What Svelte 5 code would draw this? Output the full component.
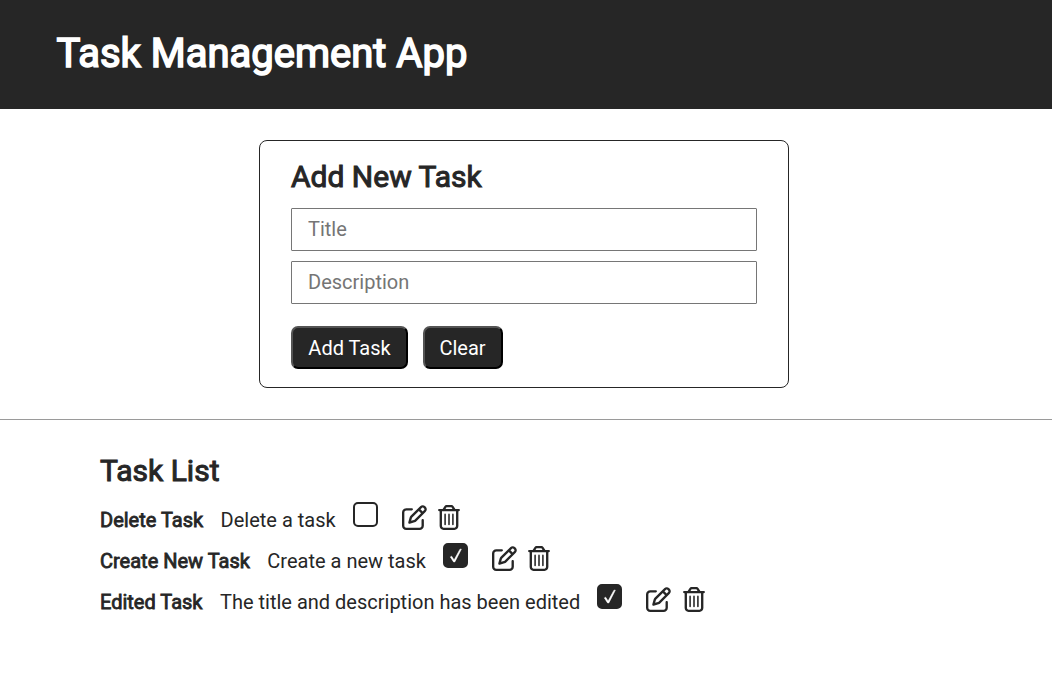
<script>
  let title = $state('');
  let description = $state('');
  let tasks = $state([
    { id: 1, title: 'Delete Task', description: 'Delete a task', done: false },
    { id: 2, title: 'Create New Task', description: 'Create a new task', done: true },
    { id: 3, title: 'Edited Task', description: 'The title and description has been edited', done: true }
  ]);

  function clear() {
    title = '';
    description = '';
  }

  function add() {
    if (!title) return;
    tasks.push({ id: Date.now(), title, description, done: false });
    clear();
  }

  function edit(task) {
    title = task.title;
    description = task.description;
    remove(task);
  }

  function remove(task) {
    tasks = tasks.filter((t) => t.id !== task.id);
  }
</script>

<header><h1>Task Management App</h1></header>

<section class="new-task">
  <h2>Add New Task</h2>
  <input type="text" placeholder="Title" bind:value={title} />
  <input type="text" placeholder="Description" bind:value={description} />
  <div class="buttons">
    <button class="btn" onclick={add}>Add Task</button>
    <button class="btn" onclick={clear}>Clear</button>
  </div>
</section>

<div class="divider"></div>

<section class="list">
  <h2>Task List</h2>
  <ul>
    {#each tasks as task (task.id)}
      <li>
        <span class="name">{task.title}</span>
        <span class="desc">{task.description}</span>
        <button class="box" class:done={task.done} aria-label="Done" onclick={() => (task.done = !task.done)}>
          {#if task.done}
            <svg viewBox="0 0 25 25" width="25" height="25"><path d="M7.4 13.9 L8.6 13.2 L11.1 17 L17 6.2 L18.3 6.2 L11.8 18.9 L10.6 18.9 Z" fill="#fff" stroke="#fff" stroke-width=".6" /></svg>
          {/if}
        </button>
        <button class="icon edit" aria-label="Edit" onclick={() => edit(task)}>
          <svg viewBox="0 0 512 512" width="25" height="25"><path fill="currentColor" d="M441 58.9L453.1 71c9.4 9.4 9.4 24.6 0 33.9L424 134.1 377.9 88 407 58.9c9.4-9.4 24.6-9.4 33.9 0zM209.8 256.2L344 121.9 390.1 168 255.8 302.2c-2.9 2.9-6.5 5-10.4 6.1l-58.5 16.7 16.7-58.5c1.1-3.9 3.2-7.5 6.1-10.4zM373.1 25L175.8 222.2c-8.7 8.7-15 19.4-18.3 31.1l-28.6 100c-2.4 8.4-.1 17.4 6.1 23.6s15.2 8.5 23.6 6.1l100-28.6c11.8-3.4 22.5-9.7 31.1-18.3L487 138.9c28.1-28.1 28.1-73.7 0-101.8L474.9 25C446.8-3.1 401.2-3.1 373.1 25zM88 64C39.4 64 0 103.4 0 152V424c0 48.6 39.4 88 88 88H360c48.6 0 88-39.4 88-88V312c0-13.3-10.7-24-24-24s-24 10.7-24 24V424c0 22.1-17.9 40-40 40H88c-22.1 0-40-17.9-40-40V152c0-22.1 17.9-40 40-40H200c13.3 0 24-10.7 24-24s-10.7-24-24-24H88z" /></svg>
        </button>
        <button class="icon trash" aria-label="Delete" onclick={() => remove(task)}>
          <svg viewBox="0 0 448 512" width="22" height="25"><path fill="currentColor" d="M170.5 51.6L151.5 80h145l-19-28.4c-1.5-2.2-4-3.6-6.7-3.6H177.1c-2.7 0-5.2 1.3-6.7 3.6zm147-26.6L354.2 80H368h48 8c13.3 0 24 10.7 24 24s-10.7 24-24 24h-8V432c0 44.2-35.8 80-80 80H112c-44.2 0-80-35.8-80-80V128H24c-13.3 0-24-10.7-24-24S10.7 80 24 80h8H80 93.8l36.7-55.1C140.9 9.4 158.4 0 177.1 0h93.7c18.7 0 36.2 9.4 46.6 24.9zM80 128V432c0 17.7 14.3 32 32 32H336c17.7 0 32-14.3 32-32V128H80zm80 64V400c0 8.8-7.2 16-16 16s-16-7.2-16-16V192c0-8.8 7.2-16 16-16s16 7.2 16 16zm80 0V400c0 8.8-7.2 16-16 16s-16-7.2-16-16V192c0-8.8 7.2-16 16-16s16 7.2 16 16zm80 0V400c0 8.8-7.2 16-16 16s-16-7.2-16-16V192c0-8.8 7.2-16 16-16s16 7.2 16 16z" /></svg>
        </button>
      </li>
    {/each}
  </ul>
</section>

<style>
  :global(body) {
    margin: 0;
    background: #fff;
    color: #262626;
    font-family: Roboto, sans-serif;
    font-size: 20px;
  }
  header {
    box-sizing: border-box;
    height: 109px;
    padding: 30px 56.5px;
    background: #262626;
    color: #fff;
  }
  h1, h2 {
    margin: 0;
    font-weight: 400;
  }
  h1 {
    font-size: 40px;
    line-height: 47px;
    -webkit-text-stroke: 1.6px currentColor;
  }
  h2 {
    font-size: 30px;
    line-height: 35px;
    -webkit-text-stroke: 1px currentColor;
  }
  .new-task {
    box-sizing: border-box;
    width: 530px;
    height: 248px;
    margin: 31px 0 0 259px;
    padding: 18px 31px 0;
    border: 1px solid #262626;
    border-radius: 8px;
  }
  input {
    display: block;
    box-sizing: border-box;
    width: 466px;
    height: 43px;
    margin: 0 0 10px;
    padding: 0 16px 2px;
    border: 1px solid #767676;
    border-radius: 1px;
    background: #fff;
    font: 20px Roboto, sans-serif;
  }
  h2 + input {
    margin-top: 14px;
  }
  input::placeholder {
    color: #757575;
  }
  .buttons {
    display: flex;
    gap: 15px;
    margin-top: 22px;
  }
  .btn {
    box-sizing: border-box;
    width: 117px;
    height: 43px;
    padding: 0;
    border: 2px outset #000;
    border-radius: 7px;
    background: #262626;
    color: #fff;
    font: 20px Roboto, sans-serif;
  }
  .btn + .btn {
    width: 80px;
    padding-right: 1px;
  }
  .divider {
    height: 1px;
    margin-top: 31px;
    background: #9a9a9a;
  }
  .list {
    padding: 33px 100px 0;
  }
  ul {
    margin: 13px 0 0;
    padding: 0;
    list-style: none;
  }
  li {
    display: flex;
    align-items: flex-start;
    height: 41px;
  }
  .name, .desc {
    line-height: 23px;
    padding-top: 8px;
    white-space: nowrap;
  }
  .name {
    margin-right: 17.5px;
    -webkit-text-stroke: .8px currentColor;
  }
  .box {
    box-sizing: border-box;
    width: 25px;
    height: 25px;
    margin: 1px 0 0 17px;
    padding: 0;
    border: 2px solid #262626;
    border-radius: 5px;
    background: #fff;
  }
  .box.done {
    background: #262626;
  }
  .box svg {
    margin: -2px;
  }
  svg {
    display: block;
  }
  .icon {
    padding: 0;
    border: 0;
    background: none;
    color: #262626;
  }
  .edit {
    margin: 4px 0 0 24px;
  }
  .trash {
    margin: 4px 0 0 11.3px;
  }
</style>
